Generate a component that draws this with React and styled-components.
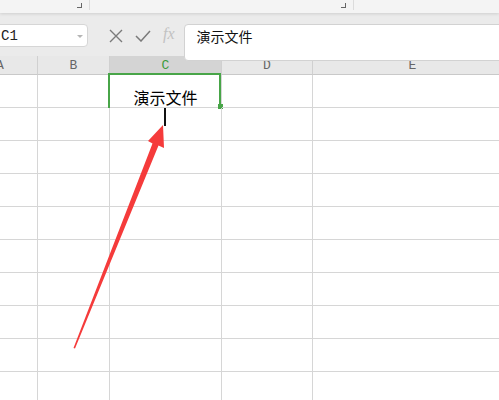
import styled, { createGlobalStyle } from 'styled-components';

const GlobalStyle = createGlobalStyle`
    html, body {
        margin: 0;
        padding: 0;
        background: #ffffff;
    }
    body {
        font-family: "Liberation Sans", "Noto Sans CJK SC", sans-serif;
    }
`;

const Screen = styled.div`
    position: relative;
    width: 499px;
    height: 400px;
    overflow: hidden;
    background: #ffffff;
`;

const Toolbar = styled.div`
    position: relative;
    z-index: 3;
    display: flex;
    height: 13px;
    background: #f4f4f4;
    box-shadow: 0 1px 3px rgba(0, 0, 0, 0.12);
`;

const ToolGroup = styled.div`
    position: relative;
    width: ${({w}) => w}px;
    height: 10px;
    border-right: 1px solid #dcdcdc;
    &::after {
        content: '';
        position: absolute;
        right: 7px;
        top: 3px;
        width: 4px;
        height: 4px;
        border-right: 1px solid #666;
        border-bottom: 1px solid #666;
    }
`;

const FormulaBar = styled.div`
    display: flex;
    align-items: flex-start;
    height: 43px;
    padding-top: 11px;
    box-sizing: border-box;
    background: #ebebeb;
`;

const NameBox = styled.div`
    position: relative;
    display: flex;
    align-items: center;
    margin-left: -8px;
    width: 96px;
    height: 23px;
    padding-left: 8px;
    box-sizing: border-box;
    background: #ffffff;
    border: 1px solid #d6d6d6;
    border-radius: 4px;
    font-family: "Liberation Mono", monospace;
    font-size: 14px;
    color: #222;
    &::after {
        content: '';
        position: absolute;
        right: 4px;
        top: 10px;
        border-left: 3px solid transparent;
        border-right: 3px solid transparent;
        border-top: 3px solid #b5b5b5;
    }
`;

const Icons = styled.div`
    display: flex;
    align-items: center;
    gap: 12px;
    height: 23px;
    margin-left: 21px;
    color: #7a7a7a;
`;

const Fx = styled.span`
    font-family: "Liberation Serif", serif;
    font-style: italic;
    font-size: 16px;
    color: #c2c2c2;
    margin-top: -4px;
`;

const FormulaInput = styled.div`
    position: relative;
    z-index: 2;
    flex: 1;
    height: 37px;
    margin-left: 9px;
    margin-right: -10px;
    padding: 1px 0 0 12px;
    box-sizing: border-box;
    background: #ffffff;
    border: 1px solid #d2d2d2;
    border-radius: 4px;
    font-family: "Noto Sans CJK SC", sans-serif;
    font-size: 14px;
    line-height: 20px;
    color: #111;
`;

const Sheet = styled.div`
    display: grid;
    grid-template-columns: 75px 72px 112px 91px 200px;
    grid-template-rows: 19px;
    grid-auto-rows: 33px;
    margin-left: -37px;
`;

const HeaderCell = styled.div`
    display: flex;
    align-items: center;
    justify-content: center;
    box-sizing: border-box;
    background: ${({active}) => (active ? '#d4d4d4' : '#e8e8e8')};
    border-right: 1px solid #d0d0d0;
    border-bottom: 1px solid #c9c9c9;
    font-family: "Liberation Mono", monospace;
    font-size: 13px;
    color: ${({active}) => (active ? '#3d9b3d' : '#666')};
`;

const Cell = styled.div`
    position: relative;
    display: flex;
    align-items: flex-end;
    justify-content: center;
    box-sizing: border-box;
    border-right: 1px solid #d6d6d6;
    border-bottom: 1px solid #d6d6d6;
    font-family: "Noto Sans CJK SC", sans-serif;
    font-size: 16px;
    line-height: 19px;
    color: #000;
    ${({selected}) => selected && `
        &::before {
            content: '';
            position: absolute;
            top: -2px;
            left: -2px;
            right: 0;
            bottom: -1px;
            border: 2px solid #48a548;
            border-bottom: none;
        }
        &::after {
            content: '';
            position: absolute;
            right: -2px;
            bottom: -2px;
            width: 5px;
            height: 5px;
            background: #48a548;
        }
    `}
`;

const Caret = styled.div`
    position: absolute;
    left: 164px;
    top: 108px;
    width: 2px;
    height: 18px;
    background: #111;
`;

const Arrow = styled.svg`
    position: absolute;
    left: 0;
    top: 0;
    pointer-events: none;
`;

const columns = ['A', 'B', 'C', 'D', 'E'];
const rows = Array.from({length: 10}, (_, i) => i);

function App() {
    return (
        <Screen>
            <GlobalStyle/>
            <Toolbar>
                <ToolGroup w={89}/>
                <ToolGroup w={263}/>
            </Toolbar>
            <FormulaBar>
                <NameBox>C1</NameBox>
                <Icons>
                    <svg width="14" height="14" viewBox="0 0 14 14">
                        <path d="M1 1 L13 13 M13 1 L1 13" stroke="currentColor" strokeWidth="1.4" fill="none"/>
                    </svg>
                    <svg width="16" height="12" viewBox="0 0 16 12">
                        <path d="M1 6 L6 11 L15 1" stroke="currentColor" strokeWidth="1.5" fill="none"/>
                    </svg>
                    <Fx>fx</Fx>
                </Icons>
                <FormulaInput>演示文件</FormulaInput>
            </FormulaBar>
            <Sheet>
                {columns.map(c => (
                    <HeaderCell key={c} active={c === 'C'}>{c}</HeaderCell>
                ))}
                {rows.map(r => columns.map(c => (
                    <Cell key={r + c} selected={r === 0 && c === 'C'}>
                        {r === 0 && c === 'C' ? '演示文件' : null}
                    </Cell>
                )))}
            </Sheet>
            <Caret/>
            <Arrow width="499" height="400" viewBox="0 0 499 400">
                <polygon
                    points="163,125 164,148 158.5,145.5 75,348.5 73.5,348 152.5,143.5 148,141"
                    fill="#f53b3b"
                />
            </Arrow>
        </Screen>
    );
}

export default App;
